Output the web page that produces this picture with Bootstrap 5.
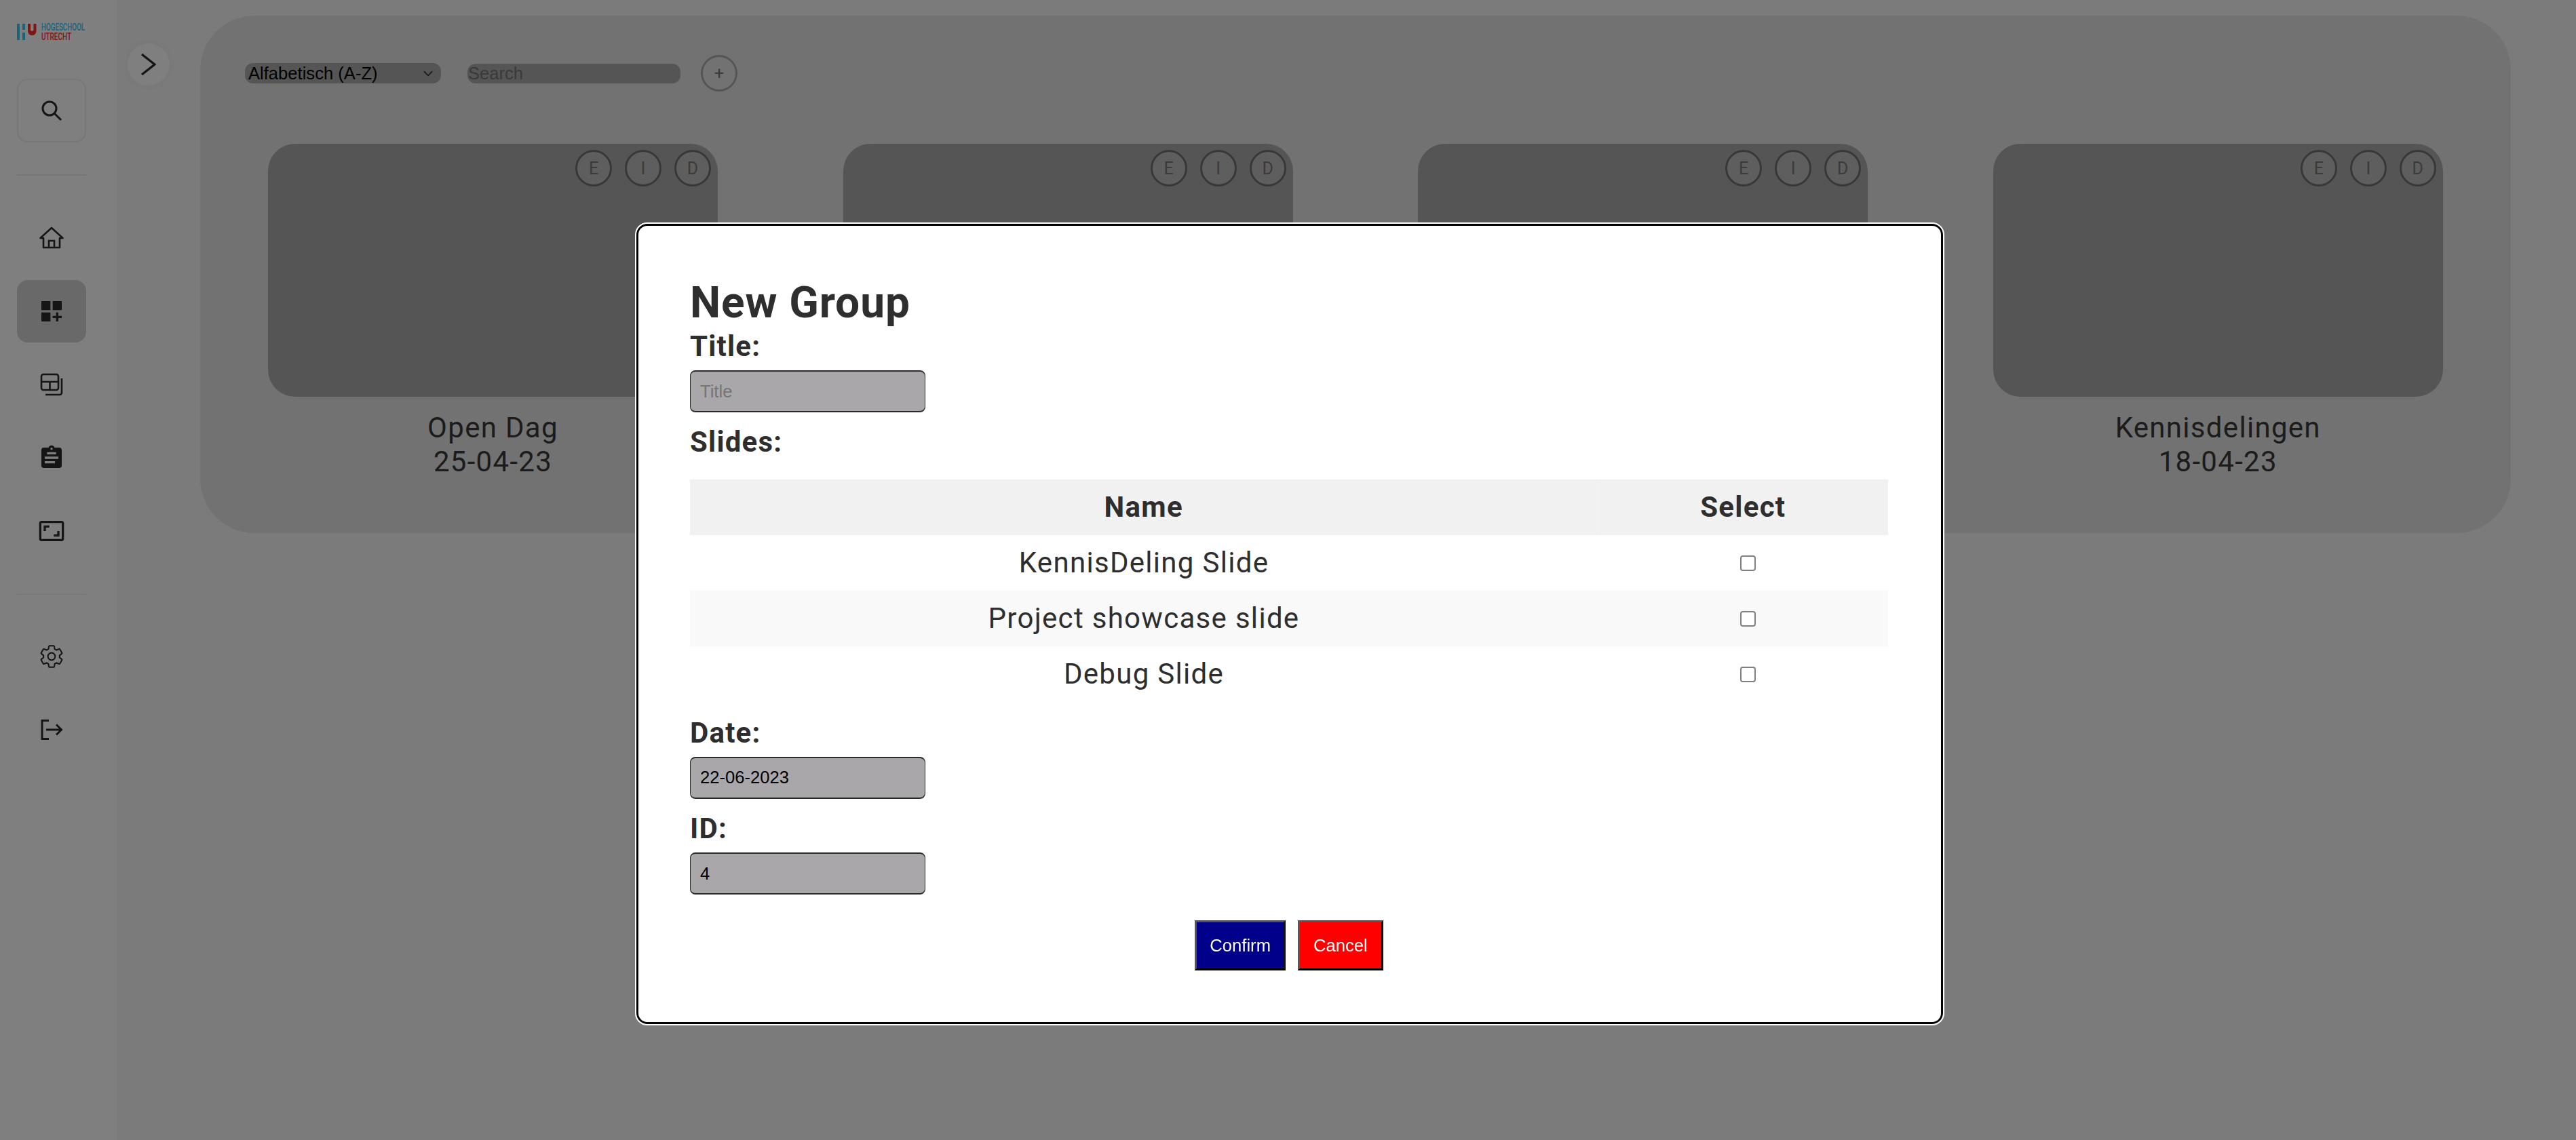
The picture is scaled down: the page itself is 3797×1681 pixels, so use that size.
<!DOCTYPE html>
<html lang="nl">
<head>
  <meta charset="UTF-8">
  <title>New Group</title>
  <link href="https://cdn.jsdelivr.net/npm/bootstrap@5.3.0/dist/css/bootstrap.min.css" rel="stylesheet">
  <style>
    html, body { height: 100%; }
    body { font-family: Roboto, "Liberation Sans", sans-serif; background: #f7f7f7; color: #000; overflow: hidden; }

    /* sidebar */
    .side-bar { width: 172px; background: #fff; padding: 31px 45px 0 25px; flex: none; }
    .side-logo { display: block; width: 140px; height: 32px; margin-bottom: 53px; }
    .side-search { height: 94px; border: 2px solid #eee; border-radius: 16px; }
    .side-rule { margin: 47px 0 46px; border: 0; height: 2px; background: #eee; opacity: 1; }
    .side-rule.thin { height: 1px; margin: 47px 0 45px; }
    .side-link { height: 92px; border-radius: 16px; color: #2b2b2b; }
    .side-link.active { background: #d2d2d2; }
    .side-list { gap: 16px; }

    /* overview behind the dialog */
    .toggle-btn { width: 62px; height: 62px; margin: 64px 45px 0 16px; border: 0; background: #fefefe; box-shadow: 0 0 14px rgba(0,0,0,.05); flex: none; }
    .group-panel { width: 3406px; height: 763px; margin-top: 23px; background: #e5e5e5; border-radius: 80px; padding: 58px 98px 0 66px; flex: none; }
    .sort-select { width: 289px; height: 30px; padding: 0 0 0 5px; font: 25.6px "Liberation Sans", Arial, sans-serif; color: #000; background-color: #aaa; background-size: 20px 15px; background-position: right 9px center; border: 0; border-radius: 12px; }
    .find-input { width: 314px; height: 29px; margin-left: 39px; padding: 0 0 0 1px; font: 25.6px "Liberation Sans", Arial, sans-serif; background: #aaa; border: 0; border-radius: 12px; }
    .find-input::placeholder { color: #757575; opacity: 1; }
    .round-btn { width: 54px; height: 54px; padding: 0; background: #bcbcbc; border: 3px solid #707070; color: #777; font-size: 25px; line-height: 1; }
    .plus-btn { margin-left: 30px; background: transparent; border-color: #aaa; }
    .toolbar-row { height: 54px; margin-bottom: 77px; margin-left: 0; }
    .group-row { margin-left: 34px; gap: 184.600px; }
    .group-cell { width: 663px; }
    .group-thumb { height: 373px; background: #aaa; border-radius: 40px; padding: 9px 10px 0 0; gap: 19px; }
    .group-name { margin-top: 21px; font-size: 42px; line-height: 50.4px; letter-spacing: 1.3px; color: #393939; }

    /* dialog */
    .group-dialog { max-width: none; width: 1926px; margin: 330px 0 0 938px; }
    .group-box { height: 1180px; padding: 76px 76px 0; border: 3px solid #000; outline: 2px solid #fff; border-radius: 16px; background: #fff; color: #2e2e2e; }
    .group-title { font-size: 64px; font-weight: 700; line-height: 1.2; letter-spacing: .9px; margin: 0; }
    .group-label { display: block; font-size: 42px; font-weight: 700; line-height: 1.2; letter-spacing: 1.2px; margin: 0 0 10px; }
    .group-input { width: 347px; height: 62px; padding: 0 14px; font: 25.6px "Liberation Sans", Arial, sans-serif; color: #000; background: #a9a7aa; border-style: solid; border-color: #2a2a2a; border-width: 2px 1px; border-radius: 8px; margin-bottom: 19px; }
    .group-input::placeholder { color: #757575; opacity: 1; }
    .slide-table { margin: 19px 0 21px; width: 1766px; table-layout: fixed; }
    .slide-table th, .slide-table td { height: 82px; padding: 0; vertical-align: middle; text-align: center; font-size: 42px; line-height: 1; letter-spacing: 1.3px; color: #2e2e2e; background: #fff; }
    .slide-table th { font-weight: 700; background: #f1f1f1; }
    .slide-table tr:nth-child(2) td { background: #f9f9f9; }
    .slide-table th + th { border-left: 1px solid #f4f4f4; }
    .slide-check { appearance: none; width: 23px; height: 23px; margin: 0 0 4px 14px; vertical-align: middle; background: #fff; border: 2px solid #808080; border-radius: 4px; }
    .group-actions { margin-top: 19px; padding-right: 2px; gap: 18px; }
    .act-btn { height: 74px; padding: 0 20px; font: 25.6px "Liberation Sans", Arial, sans-serif; color: #fff; border-width: 3px; border-style: solid; border-color: #555 #111 #000 #555; }
    .act-confirm { background: #00008b; padding: 0 19px; }
    .act-cancel { background: #f00; }
    .act-confirm:hover, .act-cancel:hover { color: #fff; }
  </style>
</head>
<body class="d-flex">
  <aside class="side-bar">
    <svg class="side-logo" viewBox="0 -4 140 32">
      <g fill="#35c8f5">
        <rect x="0" y="0" width="4" height="24"/>
        <rect x="8" y="0" width="4" height="9"/>
        <rect x="8" y="13" width="4" height="11"/>
      </g>
      <path d="M16 0h4v10a4 4 0 0 0 4.500 0V0h4v11a6 6 0 0 1-12.500 0z" fill="#ff2a2a"/>
      <text x="36" y="10" font-family="Roboto, sans-serif" font-size="14" font-weight="500" fill="#35c8f5" textLength="64" lengthAdjust="spacingAndGlyphs">HOGESCHOOL</text>
      <text x="36" y="24" font-family="Roboto, sans-serif" font-size="14" font-weight="500" fill="#ff2a2a" textLength="44" lengthAdjust="spacingAndGlyphs">UTRECHT</text>
    </svg>
    <div class="side-search d-flex align-items-center justify-content-center">
      <svg width="32" height="32" viewBox="0 0 32 32" fill="none" stroke="#2b2b2b" stroke-width="3"><circle cx="13" cy="13" r="10"/><path d="M20.500 20.500 30 30"/></svg>
    </div>
    <hr class="side-rule">
    <nav class="nav flex-column side-list">
      <a class="side-link d-flex align-items-center justify-content-center" href="#" aria-label="Home">
        <svg width="36" height="34" viewBox="0 0 36 34" fill="none" stroke="#2b2b2b" stroke-width="2.600"><path d="M1.500 17 18 2l16.500 15H30v14H6V17z" stroke-linejoin="round"/><path d="M14 31V21h8v10"/></svg>
      </a>
      <a class="side-link active d-flex align-items-center justify-content-center" href="#" aria-label="Groups">
        <svg width="40" height="40" viewBox="0 0 24 24" fill="#2b2b2b"><path d="M3 3h8v8H3zm10 0h8v8h-8zM3 13h8v8H3zm15 0h-2v3h-3v2h3v3h2v-3h3v-2h-3z"/></svg>
      </a>
      <a class="side-link d-flex align-items-center justify-content-center" href="#" aria-label="Slides">
        <svg width="34" height="34" viewBox="0 0 34 34" fill="none" stroke="#2b2b2b" stroke-width="2.600"><rect x="2" y="2" width="25" height="23" rx="3"/><path d="M2 13h25M14.500 13v12"/><path d="M32 8v21a3 3 0 0 1-3 3H8"/></svg>
      </a>
      <a class="side-link d-flex align-items-center justify-content-center" href="#" aria-label="Reports">
        <svg width="40" height="40" viewBox="0 0 24 24" fill="#2b2b2b" fill-rule="evenodd"><path d="M19 3h-4.180C14.400 1.840 13.300 1 12 1c-1.300 0-2.400.84-2.820 2H5c-1.100 0-2 .9-2 2v14c0 1.100.9 2 2 2h14c1.100 0 2-.9 2-2V5c0-1.100-.9-2-2-2zm-7 0c.55 0 1 .45 1 1s-.45 1-1 1-1-.45-1-1 .45-1 1-1zM8 7h8v2H8zM6 11h12v2H6zM6 15h9v2H6z"/></svg>
      </a>
      <a class="side-link d-flex align-items-center justify-content-center" href="#" aria-label="Screens">
        <svg width="40" height="40" viewBox="0 0 24 24" fill="#2b2b2b"><path d="M19 12h-2v3h-3v2h5v-5zM7 9h3V7H5v5h2V9zm14-6H3c-1.100 0-2 .9-2 2v14c0 1.100.9 2 2 2h18c1.100 0 2-.9 2-2V5c0-1.100-.9-2-2-2zm0 16.010H3V4.990h18v14.020z"/></svg>
      </a>
    </nav>
    <hr class="side-rule thin">
    <nav class="nav flex-column side-list">
      <a class="side-link d-flex align-items-center justify-content-center" href="#" aria-label="Settings">
        <svg width="38" height="38" viewBox="0 0 24 24" fill="none" stroke="#2b2b2b" stroke-width="1.300"><path d="M19.430 12.980c.04-.32.07-.64.07-.98 0-.34-.03-.66-.07-.98l2.110-1.650c.19-.15.24-.42.12-.64l-2-3.460a.5.5 0 0 0-.61-.22l-2.490 1c-.52-.4-1.080-.73-1.690-.98l-.38-2.650A.488.488 0 0 0 14 2h-4c-.25 0-.46.18-.49.42l-.38 2.650c-.61.25-1.170.59-1.690.98l-2.490-1a.566.566 0 0 0-.18-.03c-.17 0-.34.09-.43.25l-2 3.460c-.13.22-.07.49.12.64l2.110 1.650c-.04.32-.07.65-.07.98 0 .33.03.66.07.98l-2.110 1.650c-.19.15-.24.42-.12.64l2 3.460a.5.5 0 0 0 .61.22l2.490-1c.52.4 1.080.73 1.690.98l.38 2.650c.03.24.24.42.49.42h4c.25 0 .46-.18.49-.42l.38-2.650c.61-.25 1.170-.59 1.690-.98l2.490 1c.06.02.12.03.18.03.17 0 .34-.09.43-.25l2-3.460c.12-.22.07-.49-.12-.64l-2.110-1.650z"/><circle cx="12" cy="12" r="3.400"/></svg>
      </a>
      <a class="side-link d-flex align-items-center justify-content-center" href="#" aria-label="Log out">
        <svg width="34" height="32" viewBox="0 0 34 32" fill="none" stroke="#2b2b2b" stroke-width="3"><path d="M13 2.500H3v27h10"/><path d="M9 16h22M24 8.500 31.500 16 24 23.500"/></svg>
      </a>
    </nav>
  </aside>

  <button class="toggle-btn rounded-circle d-flex align-items-center justify-content-center" aria-label="Open menu">
    <svg width="22" height="32" viewBox="0 0 22 32" fill="none" stroke="#2b2b2b" stroke-width="3.200"><path d="M1 1l19 15L1 31"/></svg>
  </button>

  <main class="group-panel">
    <div class="toolbar-row d-flex align-items-center">
      <select class="form-select sort-select flex-shrink-0">
        <option>Alfabetisch (A-Z)</option>
      </select>
      <input class="form-control find-input flex-shrink-0" type="text" placeholder="Search">
      <button class="round-btn plus-btn rounded-circle">+</button>
    </div>
    <div class="group-row d-flex">
      <div class="group-cell">
        <div class="group-thumb d-flex justify-content-end">
          <button class="round-btn rounded-circle">E</button><button class="round-btn rounded-circle">I</button><button class="round-btn rounded-circle">D</button>
        </div>
        <div class="group-name text-center">Open Dag<br>25-04-23</div>
      </div>
      <div class="group-cell">
        <div class="group-thumb d-flex justify-content-end">
          <button class="round-btn rounded-circle">E</button><button class="round-btn rounded-circle">I</button><button class="round-btn rounded-circle">D</button>
        </div>
      </div>
      <div class="group-cell">
        <div class="group-thumb d-flex justify-content-end">
          <button class="round-btn rounded-circle">E</button><button class="round-btn rounded-circle">I</button><button class="round-btn rounded-circle">D</button>
        </div>
      </div>
      <div class="group-cell">
        <div class="group-thumb d-flex justify-content-end">
          <button class="round-btn rounded-circle">E</button><button class="round-btn rounded-circle">I</button><button class="round-btn rounded-circle">D</button>
        </div>
        <div class="group-name text-center">Kennisdelingen<br>18-04-23</div>
      </div>
    </div>
  </main>

  <div class="modal-backdrop show"></div>
  <div class="modal d-block" tabindex="-1">
    <div class="modal-dialog group-dialog">
      <div class="modal-content group-box">
        <h2 class="group-title">New Group</h2>
        <label class="group-label">Title:</label>
        <input class="form-control group-input" type="text" placeholder="Title">
        <label class="group-label">Slides:</label>
        <table class="table table-borderless slide-table">
          <colgroup><col style="width: 1338px"><col></colgroup>
          <thead>
            <tr><th>Name</th><th>Select</th></tr>
          </thead>
          <tbody>
            <tr><td>KennisDeling Slide</td><td><input class="slide-check" type="checkbox"></td></tr>
            <tr><td>Project showcase slide</td><td><input class="slide-check" type="checkbox"></td></tr>
            <tr><td>Debug Slide</td><td><input class="slide-check" type="checkbox"></td></tr>
          </tbody>
        </table>
        <label class="group-label">Date:</label>
        <input class="form-control group-input" type="text" value="22-06-2023">
        <label class="group-label">ID:</label>
        <input class="form-control group-input" type="text" value="4">
        <div class="group-actions d-flex justify-content-center">
          <button class="btn rounded-0 act-btn act-confirm">Confirm</button>
          <button class="btn rounded-0 act-btn act-cancel">Cancel</button>
        </div>
      </div>
    </div>
  </div>
  <script src="https://cdn.jsdelivr.net/npm/bootstrap@5.3.0/dist/js/bootstrap.bundle.min.js"></script>
</body>
</html>
